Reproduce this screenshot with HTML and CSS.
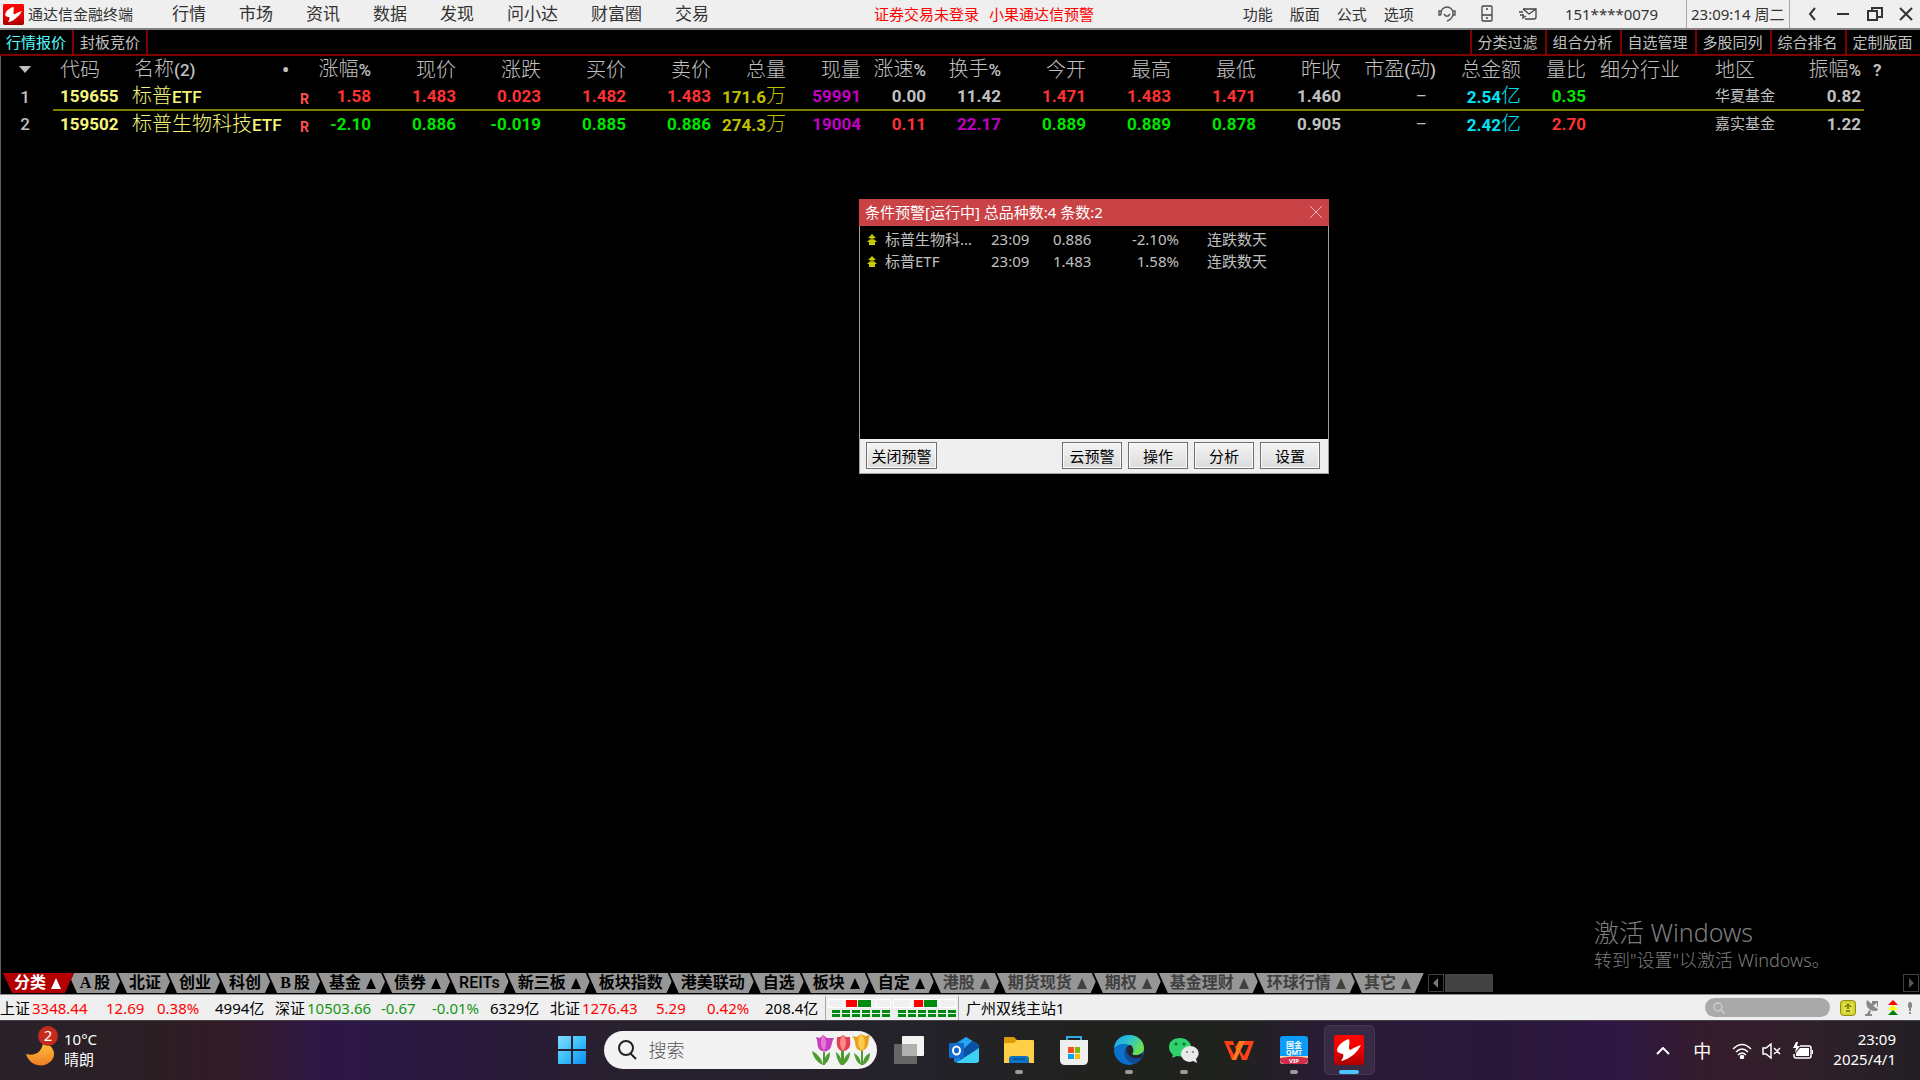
FILE: index.html
```html
<!DOCTYPE html>
<html lang="zh-CN">
<head>
  <meta charset="utf-8">
  <title>通达信金融终端</title>
  <link rel="stylesheet" href="styles.css">
</head>
<body>
  <svg class="defs" width="0" height="0">
    <symbol id="tdx" viewBox="0 0 30 30">
      <linearGradient id="red" x1="0" y1="0" x2="0" y2="1"><stop offset="0" stop-color="#ff0505"/><stop offset=".5" stop-color="#e00"/><stop offset="1" stop-color="#a80000"/></linearGradient>
      <rect width="30" height="30" rx="2" fill="url(#red)"/>
      <path d="M15 4C9 6 4 10 3 15c0 3 3 3 6 4 1 2 0 4-2 7 6-1 13-6 17-11 1-2 2-3 3-5-3 1-6 2-9 4-1 1-3 1-3-1 0-3 1-6 0-9z" fill="#fff"/>
    </symbol>
    <symbol id="up2" viewBox="0 0 10 11">
      <path d="M5 0l4 4H7v1l3 3H8v3H2V8H0l3-3V4H1z" fill="#c8c800"/>
      <path d="M2 5h6" stroke="#000" stroke-width=".6"/>
    </symbol>
  </svg>

  <header class="topbar">
    <svg class="logo"><use href="#tdx"/></svg>
    <h1>通达信金融终端</h1>
    <nav class="menu">
      <a href="#">行情</a><a href="#">市场</a><a href="#">资讯</a><a href="#">数据</a><a href="#">发现</a><a href="#">问小达</a><a href="#">财富圈</a><a href="#">交易</a>
    </nav>
    <p class="notice"><span>证券交易未登录</span><span>小果通达信预警</span></p>
    <nav class="options">
      <a href="#">功能</a><a href="#">版面</a><a href="#">公式</a><a href="#">选项</a>
    </nav>
    <div class="top-icons">
      <button aria-label="客服"><svg width="18" height="18" viewBox="0 0 18 18" fill="none" stroke="#555" stroke-width="1.4"><path d="M3 10V8a6 6 0 0 1 12 0v2M3 6H1v4h2M15 6h2v4h-2M15 10c-1 3-3 5-6 6M6 9c2 3 4 3 6 0"/></svg></button>
      <button aria-label="手机"><svg width="12" height="18" viewBox="0 0 12 18" fill="none" stroke="#444" stroke-width="1.3"><rect x="1" y="1" width="10" height="15" rx="1"/><path d="M1 10h10M5 13h2M5 4h2"/></svg></button>
      <button aria-label="邮件"><svg width="20" height="14" viewBox="0 0 20 14" fill="none" stroke="#444" stroke-width="1.3"><path d="M5 2h13v8q0 2-2 2H7M5 2l6 5 7-5M1 5h4M2 8h4M5 8v3l3-2"/></svg></button>
    </div>
    <span class="account">151****0079</span>
    <time class="clock">23:09:14 周二</time>
    <div class="winbtns">
      <button aria-label="返回"><svg width="14" height="16" viewBox="0 0 14 16"><path d="M9 2L4 8l5 6" fill="none" stroke="#333" stroke-width="2"/></svg></button>
      <button aria-label="最小化"><svg width="14" height="16" viewBox="0 0 14 16"><path d="M1 8h12" stroke="#333" stroke-width="2"/></svg></button>
      <button aria-label="还原"><svg width="16" height="16" viewBox="0 0 16 16" fill="none" stroke="#333" stroke-width="2"><path d="M5 4V2h10v9h-4"/><path d="M1 5h9v9H1z"/></svg></button>
      <button aria-label="关闭"><svg width="14" height="16" viewBox="0 0 14 16"><path d="M1 2l12 12M13 2L1 14" stroke="#333" stroke-width="2"/></svg></button>
    </div>
  </header>

  <nav class="toolbar">
    <a class="on" href="#">行情报价</a><a href="#">封板竞价</a>
    <div class="tools">
      <a href="#">分类过滤</a><a href="#">组合分析</a><a href="#">自选管理</a><a href="#">多股同列</a><a href="#">综合排名</a><a href="#">定制版面</a>
    </div>
  </nav>

  <main>
    <table class="quotes">
      <thead>
        <tr>
          <th class="no"><i class="down"></i></th><th class="code">代码</th><th class="name">名称<b>(2)</b></th><th class="mark">•</th>
          <th class="w61">涨幅<b>%</b></th><th class="w85">现价</th><th class="w85">涨跌</th><th class="w85">买价</th><th class="w85">卖价</th>
          <th class="w75">总量</th><th class="w75">现量</th><th class="w65">涨速<b>%</b></th><th class="w75">换手<b>%</b></th>
          <th class="w85">今开</th><th class="w85">最高</th><th class="w85">最低</th><th class="w85">昨收</th><th class="w95">市盈<b>(</b>动<b>)</b></th>
          <th class="w85">总金额</th><th class="w65">量比</th><th class="industry">细分行业</th><th class="region">地区</th><th class="w61">振幅<b>%</b></th><th class="help">?</th>
        </tr>
      </thead>
      <tbody>
        <tr class="current">
          <td class="no">1</td><td class="code">159655</td><td class="name">标普<b>ETF</b></td><td class="mark">R</td>
          <td class="up">1.58</td><td class="up">1.483</td><td class="up">0.023</td><td class="up">1.482</td><td class="up">1.483</td>
          <td class="vol">171.6<span>万</span></td><td class="last">59991</td><td>0.00</td><td>11.42</td>
          <td class="up">1.471</td><td class="up">1.483</td><td class="up">1.471</td><td>1.460</td><td class="none">–</td>
          <td class="amount">2.54<span>亿</span></td><td class="dn">0.35</td><td></td><td class="region">华夏基金</td><td>0.82</td><td></td>
        </tr>
        <tr>
          <td class="no">2</td><td class="code">159502</td><td class="name">标普生物科技<b>ETF</b></td><td class="mark">R</td>
          <td class="dn">-2.10</td><td class="dn">0.886</td><td class="dn">-0.019</td><td class="dn">0.885</td><td class="dn">0.886</td>
          <td class="vol">274.3<span>万</span></td><td class="last">19004</td><td class="up">0.11</td><td class="last">22.17</td>
          <td class="dn">0.889</td><td class="dn">0.889</td><td class="dn">0.878</td><td>0.905</td><td class="none">–</td>
          <td class="amount">2.42<span>亿</span></td><td class="up">2.70</td><td></td><td class="region">嘉实基金</td><td>1.22</td><td></td>
        </tr>
      </tbody>
    </table>

    <section class="alert">
      <div class="alert-title">
        <h2>条件预警[运行中] 总品种数:4 条数:2</h2>
        <button aria-label="关闭"><svg width="12" height="12" viewBox="0 0 12 12"><path d="M0 0l12 12M12 0L0 12" stroke="#eeb4b4"/></svg></button>
      </div>
      <table>
        <tr><td class="a-icon"><svg><use href="#up2"/></svg></td><td class="a-name">标普生物科...</td><td class="a-time">23:09</td><td class="a-price">0.886</td><td class="a-pct">-2.10%</td><td class="a-cond">连跌数天</td></tr>
        <tr><td class="a-icon"><svg><use href="#up2"/></svg></td><td class="a-name">标普ETF</td><td class="a-time">23:09</td><td class="a-price">1.483</td><td class="a-pct">1.58%</td><td class="a-cond">连跌数天</td></tr>
      </table>
      <div class="alert-foot">
        <button class="stop">关闭预警</button><button>云预警</button><button>操作</button><button>分析</button><button>设置</button>
      </div>
    </section>

    <div class="activate">
      <p class="big">激活 Windows</p>
      <p>转到"设置"以激活 Windows。</p>
    </div>
  </main>

  <div class="tabbar">
    <nav class="tabs">
      <a class="on" href="#">分类<i></i></a><a href="#"><b>A</b>股</a><a href="#">北证</a><a href="#">创业</a><a href="#">科创</a><a href="#"><b>B</b>股</a><a href="#">基金<i></i></a><a href="#">债券<i></i></a><a class="reits" href="#">REITs</a><a href="#">新三板<i></i></a><a href="#">板块指数</a><a href="#">港美联动</a><a href="#">自选</a><a href="#">板块<i></i></a><a href="#">自定<i></i></a><a class="dim" href="#">港股<i></i></a><a class="dim" href="#">期货现货<i></i></a><a class="dim" href="#">期权<i></i></a><a class="dim" href="#">基金理财<i></i></a><a class="dim" href="#">环球行情<i></i></a><a class="dim" href="#">其它<i></i></a>
    </nav>
    <button class="arrow" aria-label="向左"><svg width="6" height="10" viewBox="0 0 6 10"><path d="M5 0v10L0 5z" fill="#777"/></svg></button>
    <span class="thumb"></span>
    <button class="arrow end" aria-label="向右"><svg width="6" height="10" viewBox="0 0 6 10"><path d="M1 0v10l5-5z" fill="#555"/></svg></button>
  </div>

  <div class="status">
    <div class="index rise"><span>上证</span><em>3348.44</em><em>12.69</em><em>0.38%</em><span>4994亿</span></div>
    <div class="index fall"><span>深证</span><em>10503.66</em><em>-0.67</em><em>-0.01%</em><span>6329亿</span></div>
    <div class="index rise"><span>北证</span><em>1276.43</em><em>5.29</em><em>0.42%</em><span>208.4亿</span></div>
    <div class="meter">
      <svg width="128" height="18" viewBox="0 0 128 18">
        <g fill="#f0f0f0" stroke="#fff"><path d="M.5.5h62v8H.5zM65.500.5h62v8h-62zM15 1v7M48 1v7M83 1v7M112 1v7"/></g>
        <path d="M18 1h11v7H18zM86 1h9v7h-9z" fill="#f00"/>
        <path d="M30 1h13v7H30zM96 1h13v7H96z" fill="#008a10"/>
        <path d="M4 12.500h59M4 16.500h59M70 12.500h58M70 16.500h58" stroke="#008a10" stroke-width="3" stroke-dasharray="8 2"/>
      </svg>
    </div>
    <span class="server">广州双线主站1</span>
    <label class="find"><svg width="12" height="12" viewBox="0 0 12 12" fill="none" stroke="#ccc" stroke-width="1.500"><circle cx="5" cy="5" r="4"/><path d="M8 8l4 4"/></svg><input type="text" aria-label="搜索品种"></label>
    <div class="status-icons">
      <svg width="16" height="16" viewBox="0 0 16 16"><rect x=".5" y=".5" width="15" height="15" rx="3" fill="#d2d22c" stroke="#8d8d10"/><path d="M3 3h10v10H3z" fill="#dede48"/><path d="M8 3l4 4H9v2H7V7H4zM6 10h4v2H6z" fill="#8a8a0a"/></svg>
      <svg width="14" height="16" viewBox="0 0 14 16" fill="#888"><path d="M2 0c-2 5 1 11 8 11 2 0 3-1 3-2L8 6l4-3v4h1V1H7v3zM4 10l-2 4H0v2h7v-2H5l1-3z"/></svg>
      <svg width="10" height="16" viewBox="0 0 10 16"><path d="M5 0l5 5H0z" fill="#f00"/><path d="M5 5l5 5H0z" fill="#ff0"/><path d="M5 10l5 5H0z" fill="#008000"/></svg>
      <svg width="6" height="12" viewBox="0 0 6 12" fill="#888"><path d="M2 0h2l1 2v3L4 6v3H2V6L1 5V2zM2 10h2v2H2z"/></svg>
    </div>
  </div>

  <footer class="taskbar">
    <a class="weather" href="#">
      <span class="moon"><svg width="28" height="26" viewBox="0 0 28 26"><linearGradient id="mg" x1="0" y1="0" x2="0" y2="1"><stop offset="0" stop-color="#ffc33d"/><stop offset="1" stop-color="#ef7d23"/></linearGradient><path d="M0 13c9 3 17-3 17-12 12 4 14 14 7 20-8 7-21 3-24-8z" fill="url(#mg)"/></svg><b>2</b></span>
      <span class="temp">10°C<br>晴朗</span>
    </a>
    <div class="apps">
      <button class="start" aria-label="开始"><svg width="30" height="30" viewBox="0 0 30 30"><linearGradient id="wg" x1="0" y1="0" x2="1" y2="1"><stop offset="0" stop-color="#82dcfb"/><stop offset=".5" stop-color="#3cc0fb"/><stop offset="1" stop-color="#0c8df6"/></linearGradient><path d="M1 1h13v13H1zM16 1h13v13H16zM1 16h13v13H1zM16 16h13v13H16z" fill="url(#wg)"/></svg></button>
      <label class="search">
        <svg width="20" height="20" viewBox="0 0 20 20" fill="none" stroke="#222" stroke-width="2"><circle cx="9" cy="8" r="7"/><path d="M13 13l6 6"/></svg>
        <input type="text" placeholder="搜索">
        <svg width="60" height="32" viewBox="0 0 60 32">
          <g fill="#4d9c2f"><path d="M12 18h2v13h-2z"/><path d="M12 31C5 28 2 22 1 17c6 3 10 8 11 14zM13 31c0-7 2-10 6-13 0 6-2 10-6 13z"/><path d="M30 16h3v15h-3z"/><path d="M30 31c-3-3-5-9-5-13 4 3 6 8 6 13zM32 31c0-6 3-10 7-13 0 6-3 11-7 13zM50 16h2v15h-2z"/><path d="M50 31c-4-2-6-7-7-12 5 3 7 7 7 12zM52 31c0-7 3-10 7-12 0 6-3 10-7 12z"/></g>
          <path d="M5 3l4 1 3-3 4 3 7 0c-2 3-2 6-3 9-2 5-9 6-12 2C6 12 7 7 5 3z" fill="#c63fbb"/><path d="M12 1c-3 5-3 11 1 16 3-5 3-11-1-16z" fill="#e878d8"/>
          <path d="M26 3l3 0 3-2 3 2 4 0c0 5 1 8-1 11-3 4-9 4-11 0s-1-7-1-11z" fill="#e0404f"/><path d="M32 1c-4 4-4 11 0 16 4-5 4-12 0-16z" fill="#fa8a8a"/>
          <path d="M41 2l5 1 4-3 4 2 5-1c-2 5-1 9-3 12-3 5-9 5-11 0-1-4-1-8-4-11z" fill="#e8a01c"/><path d="M50 0c-4 5-4 12 1 17 4-5 4-13-1-17z" fill="#fccb4c"/>
        </svg>
      </label>
      <button aria-label="任务视图"><svg width="32" height="32" viewBox="0 0 32 32"><rect x="9" y="2" width="22" height="20" rx="1" fill="#f3f3f3"/><rect x="1" y="10" width="23" height="20" rx="1" fill="#666"/><path d="M9 10h15v12H9z" fill="#b0b0b0"/></svg></button>
      <button aria-label="Outlook"><svg width="32" height="32" viewBox="0 0 32 32"><path d="M6 10L18 3l13 8v17H6z" fill="#1480d8"/><path d="M18 3l11 7-16 10-6-8z" fill="#28a8ea"/><path d="M24 7l7 4v4L13 26l-3-6z" fill="#0b4fa6"/><path d="M31 14v12q0 3-3 3H8z" fill="#3fd0f5"/><rect x="1" y="9" width="15" height="15" rx="1" fill="#0f6cce"/><ellipse cx="8.500" cy="16.500" rx="3.500" ry="4" fill="none" stroke="#fff" stroke-width="2"/></svg></button>
      <button class="run" aria-label="文件资源管理器"><svg width="32" height="32" viewBox="0 0 32 32"><path d="M1 4q0-1 1-1h9l3 3h12v7H1z" fill="#dd9a08"/><path d="M1 9h10l3-3h16q1 0 1 1v22H1z" fill="#ffcf48"/><path d="M6 29v-4q0-3 3-3h14q3 0 3 3v4z" fill="#0f73c4"/><path d="M10 25h12" stroke="#064e91" stroke-width="1.500"/></svg></button>
      <button aria-label="Microsoft Store"><svg width="32" height="32" viewBox="0 0 32 32"><path d="M9 8V3h14v5" fill="none" stroke="#2da9e6" stroke-width="2"/><path d="M2 6h28v20q0 5-5 5H7q-5 0-5-5z" fill="#efefef"/><path d="M10 13h6v6h-6z" fill="#f25022"/><path d="M17 13h5v6h-5z" fill="#7fba00"/><path d="M10 20h6v5h-6z" fill="#00a4ef"/><path d="M17 20h5v5h-5z" fill="#ffb900"/></svg></button>
      <button class="run" aria-label="Edge"><svg width="32" height="32" viewBox="0 0 32 32"><linearGradient id="eg" x1="0" y1="0" x2="1" y2=".5"><stop offset="0" stop-color="#1b9de2"/><stop offset=".5" stop-color="#2cc3cf"/><stop offset="1" stop-color="#6ae14e"/></linearGradient><circle cx="16" cy="16" r="15" fill="#0c71ca"/><path d="M1 14C2 6 8 1 16 1c9 0 15 6 15 13 0 5-4 7-8 7-4 0-5-1-4-3 3-6-8-13-18-4z" fill="url(#eg)"/><path d="M18 11c-6 0-6 7-3 11 4 4 10 4 14 1l1-5c-4 4-9 4-11 2 2-2 2-6-1-9z" fill="#24222b"/><path d="M13 14c-4 4-1 14 8 16 4-1 7-4 8-7-6 3-15 1-16-9z" fill="#114b95"/></svg></button>
      <button class="run" aria-label="微信"><svg width="32" height="32" viewBox="0 0 32 32"><path d="M12 4C5 4 1 8 1 13c0 4 2 6 4 8l-1 3 5-2c8 2 14-3 14-9 0-5-5-9-11-9z" fill="#2fd26d"/><path d="M22 12c-5 0-9 4-9 8s4 8 9 8l3-1 4 2-1-4c6-6 1-13-6-13z" fill="#e9e9e9"/><g fill="#176b35"><circle cx="8" cy="10" r="1.500"/><circle cx="16" cy="10" r="1.500"/></g><g fill="#777"><circle cx="19" cy="18" r="1"/><circle cx="25" cy="18" r="1"/></g></svg></button>
      <button aria-label="WPS"><svg width="32" height="32" viewBox="0 0 32 32"><path d="M1 7h9l2 6 4-6h15l-7 19h-5l-3-8-3 8H9zM6 11l5 10 2-5-2-5zM20 11l-3 5 4 6 5-11z" fill="#ff4018" fill-rule="evenodd"/><path d="M16 7h6l-9 19h-4l4-9z" fill="#ff7a1c"/></svg></button>
      <button class="run" aria-label="国金QMT"><svg width="32" height="32" viewBox="0 0 32 32"><rect x="2" y="2" width="28" height="28" rx="3" fill="#0a9cf8"/><path d="M2 22h28v5q0 3-3 3H5q-3 0-3-3z" fill="#f4d9a6"/><path d="M2 24q14-3 28 0v2q0 4-5 4H7q-5 0-5-4z" fill="#d22c4c"/><text x="16" y="14" font-size="8">国金</text><text x="16" y="21" font-size="7">QMT</text><text x="16" y="29" font-size="6">VIP</text></svg></button>
      <button class="active" aria-label="通达信"><svg width="30" height="30"><use href="#tdx"/></svg></button>
    </div>
    <div class="tray">
      <button aria-label="显示隐藏的图标"><svg width="14" height="8" viewBox="0 0 14 8"><path d="M1 7l6-6 6 6" fill="none" stroke="#fff" stroke-width="2"/></svg></button>
      <button class="ime">中</button>
      <button class="net" aria-label="网络和音量">
        <svg width="20" height="16" viewBox="0 0 20 16" fill="none" stroke="#fff" stroke-width="1.500"><path d="M1 6q9-9 18 0M4 9q6-6 12 0M6 12q4-4 8 0"/><circle cx="10" cy="14" r="1.500" fill="#fff"/></svg>
        <svg width="20" height="16" viewBox="0 0 20 16" fill="none" stroke="#fff" stroke-width="1.500"><path d="M1 5h3l5-4v14l-5-4H1zM12 5l6 6M18 5l-6 6"/></svg>
        <svg width="22" height="18" viewBox="0 0 22 18" fill="none" stroke="#fff" stroke-width="1.500"><path d="M8 4h9q2 0 2 2v8q0 2-2 2H4q-2 0-2-2v-2"/><path d="M8 6h9v8H4v-3zM4 0L1 6h3L3 11l5-7H5l1-4zM20 8h1v4h-1z" fill="#fff" stroke="none"/></svg>
      </button>
      <time>23:09<br>2025/4/1</time>
    </div>
  </footer>
</body>
</html>
```
FILE: styles.css
```css
* {
  box-sizing: border-box;
}
body {
  margin: 0;
  height: 100vh;
  display: flex;
  flex-direction: column;
  overflow: hidden;
  background: #000;
  color: #c0c0c0;
  font: 15px/20px "Noto Sans", "Noto Sans CJK SC", sans-serif;
}
h1, h2, p {
  margin: 0;
  font-size: 15px;
  font-weight: 400;
}
a {
  color: inherit;
  text-decoration: none;
}
button, input {
  padding: 0;
  border: 0;
  background: none;
  color: inherit;
  font: inherit;
}
svg {
  display: block;
  flex: none;
}
.defs {
  position: absolute;
}
i, em {
  font-style: normal;
}

/* title bar */
.topbar {
  display: flex;
  align-items: center;
  height: 30px;
  padding-left: 3px;
  background: #efefef;
  border-bottom: 2px solid #808080;
  color: #333;
  white-space: nowrap;
}
.logo {
  width: 21px;
  height: 21px;
  margin-right: 4px;
}
.menu {
  display: flex;
  gap: 33px;
  margin-left: 39px;
  font-size: 17px;
}
.notice {
  display: flex;
  gap: 10px;
  margin: 0 auto 0 165px;
  color: #f00;
}
.options {
  display: flex;
  gap: 17px;
}
.top-icons {
  display: flex;
  align-items: center;
  gap: 25px;
  margin-left: 24px;
}
.account {
  margin: 0 28px 0 27px;
}
.clock {
  width: 104px;
  padding-left: 4px;
  border: solid #a8a8a8;
  border-width: 0 1px;
  line-height: 28px;
}
.winbtns {
  display: flex;
  justify-content: space-between;
  width: 130px;
  padding: 0 7px 0 16px;
}

.toolbar {
  display: flex;
  height: 26px;
  border-bottom: 2px solid #800000;
  line-height: 24px;
}
.toolbar a {
  width: 74px;
  text-align: center;
  border-right: 2px solid #800000;
}
.toolbar .on {
  color: #54ffff;
}
.tools {
  display: flex;
  margin-left: auto;
}
.tools a {
  width: 75px;
  padding-right: 2px;
  border-right: 0;
  border-left: 2px solid #800000;
}

/* quotes */
main {
  position: relative;
  flex: 1;
  border-left: 1px solid #606060;
}
.quotes {
  width: 100%;
  table-layout: fixed;
  border-collapse: collapse;
  font: 700 17px/24px Roboto, "Noto Sans CJK SC", sans-serif;
}
.quotes th, .quotes td {
  height: 27px;
  padding: 0 3px 0 0;
  text-align: right;
  white-space: nowrap;
}
.quotes th {
  font-size: 20px;
  font-weight: 300;
}
.quotes b {
  font-size: 17px;
  font-weight: 500;
}
.quotes td span {
  font-size: 20px;
  font-weight: 300;
}
.current td {
  border-bottom: 2px solid #808000;
}
.current td:first-child, .current td:last-child {
  border-bottom: 0;
}
.quotes .no {
  width: 52px;
  padding: 0 4px 0 0;
  font-weight: 500;
  text-align: center;
}
.down {
  display: inline-block;
  border: solid transparent;
  border-width: 7px 6px 4px;
  border-top-color: #c0c0c0;
}
.quotes .code {
  width: 73px;
  padding-left: 7px;
  text-align: left;
}
.quotes .name {
  width: 156px;
  padding: 0 0 0 6px;
  text-align: left;
}
.quotes th.name {
  padding-left: 8px;
}
td.code, td.name {
  color: #f5f57a;
}
.quotes td.name {
  font-size: 20px;
  font-weight: 300;
}
.quotes .mark {
  width: 31px;
  padding-right: 4px;
}
.quotes th.mark {
  font-weight: 700;
  text-align: left;
}
.quotes td.mark {
  color: #ff5050;
  font-size: 14px;
  line-height: 20px;
  vertical-align: bottom;
}
.w61 { width: 61px; }
.w65 { width: 65px; }
.w75 { width: 75px; }
.w85 { width: 85px; }
.w95 { width: 95px; }
.quotes .industry {
  width: 114px;
  padding-left: 11px;
  text-align: left;
}
.quotes .region {
  width: 100px;
  padding-left: 12px;
  text-align: left;
}
.quotes td.region {
  font-size: 15px;
  font-weight: 400;
}
.quotes th.help {
  padding-left: 9px;
  font-size: 17px;
  font-weight: 700;
  text-align: left;
}
.quotes td.none {
  padding-right: 12px;
  font-weight: 400;
}
.up { color: #ff3232; }
.dn { color: #00e600; }
.vol { color: #c0c000; }
.last { color: #c000c0; }
.amount { color: #02e2f4; }

/* alert window */
.alert {
  position: absolute;
  left: 858px;
  top: 143px;
  display: flex;
  flex-direction: column;
  width: 470px;
  height: 275px;
  border: 1px solid #a0a0a0;
  background: #000;
}
.alert-title {
  display: flex;
  align-items: center;
  justify-content: space-between;
  height: 27px;
  margin: -1px -1px 0;
  padding: 0 7px 2px 6px;
  background: #c94246;
  color: #fff;
}
.alert table {
  margin-top: 2px;
  border-spacing: 0;
  table-layout: fixed;
  width: 430px;
}
.alert td {
  height: 22px;
  padding: 0;
  white-space: nowrap;
}
.a-icon { width: 25px; }
.a-icon svg {
  width: 10px;
  height: 11px;
  margin-left: 7px;
}
.a-name { width: 106px; }
.a-time { width: 62px; }
.a-price { width: 60px; }
.a-pct {
  width: 66px;
  text-align: right;
}
.alert .a-cond { padding-left: 28px; }
.alert-foot {
  display: flex;
  align-items: center;
  gap: 6px;
  height: 34px;
  margin-top: auto;
  padding: 0 8px 1px 6px;
  background: #efefef;
}
.alert-foot button {
  width: 60px;
  height: 27px;
  border: 1px solid #707070;
  box-shadow: inset 0 0 0 1px #fafafa;
  background: linear-gradient(#f4f4f4, #dcdcdc);
  color: #000;
}
.alert-foot .stop {
  width: 71px;
  margin-right: auto;
}

.activate {
  position: absolute;
  right: 86px;
  bottom: 0;
  width: 240px;
  color: #7e7e7e;
  white-space: nowrap;
}
.activate p {
  font-size: 18px;
  font-weight: 300;
  line-height: 24px;
}
.activate .big {
  font-size: 25px;
  line-height: 32px;
}

/* category tabs */
.tabbar {
  display: flex;
  align-items: center;
  height: 22px;
  border-left: 1px solid #606060;
}
.tabs {
  display: flex;
  margin-right: 4px;
  color: #000;
  font: 700 16px/20px "Liberation Sans", "Noto Sans CJK SC", sans-serif;
}
.tabs a {
  position: relative;
  display: flex;
  align-items: center;
  justify-content: center;
  min-width: 58px;
  height: 20px;
  margin-right: -8px;
  padding: 0 13px;
  white-space: nowrap;
  background: #000;
  clip-path: polygon(0 0, 100% 0, calc(100% - 9px) 100%, 9px 100%);
}
.tabs a::before {
  content: "";
  position: absolute;
  inset: 0;
  z-index: -1;
  background: #969696;
  clip-path: polygon(2px 0, 100% 0, calc(100% - 9px) 100%, 11px 100%);
}
.tabs a:last-child {
  margin-right: 0;
}
.tabs .on {
  z-index: 1;
  color: #fff;
}
.tabs .on::before {
  background: #b40000;
}
.tabs .dim {
  color: #404040;
}
.tabs .reits {
  font-family: Roboto, sans-serif;
  font-weight: 500;
}
.tabs b {
  font-family: "Liberation Serif", serif;
  margin-right: 3px;
}
.tabs i {
  margin-left: 5px;
  border: solid transparent;
  border-width: 0 5px 11px;
  border-bottom-color: currentColor;
}
.arrow {
  display: flex;
  align-items: center;
  justify-content: center;
  width: 16px;
  height: 18px;
  border: 1px solid #404040;
}
.thumb {
  width: 48px;
  height: 18px;
  margin-left: 1px;
  background: #434343;
}
.end {
  margin: 0 1px 0 auto;
}

.status {
  display: flex;
  align-items: center;
  height: 26px;
  background: #efefef;
  border-top: 1px solid #909090;
  color: #000;
  white-space: nowrap;
}
.index {
  display: grid;
  grid-template-columns: 32px 74px 51px 58px 60px;
}
.rise em { color: #f00; }
.fall em { color: #149614; }
.meter {
  padding: 3px 2px;
  border: solid #a8a8a8;
  border-width: 0 1px;
}
.server {
  margin: 0 auto 0 7px;
}
.find {
  display: flex;
  align-items: center;
  width: 125px;
  height: 19px;
  padding-left: 8px;
  border-radius: 10px;
  background: #a9a9a9;
}
.find input {
  min-width: 0;
  flex: 1;
}
.status-icons {
  display: flex;
  align-items: center;
  gap: 9px;
  padding: 0 7px 0 10px;
}

/* windows taskbar */
.taskbar {
  display: grid;
  grid-template-columns: 1fr auto 1fr;
  align-items: center;
  height: 60px;
  border-top: 1px solid #454348;
  background: linear-gradient(90deg, #29222a 0, #2c1e24 8%, #331b27 12%, #2e1748 17%, #29193b 25%, #28202e 32%, #24222a 48%, #20221d 58%, #20221d 64%, #2a1a38 70%, #2a1838 78%, #2e1745 84%, #351c2c 89%, #30202a 94%, #231f24 100%);
  color: #fff;
}
.weather {
  display: flex;
  align-items: center;
  gap: 5px;
  padding-left: 26px;
}
.moon {
  position: relative;
  width: 33px;
  padding: 10px 0 4px;
}
.moon b {
  position: absolute;
  top: -5px;
  left: 12px;
  width: 20px;
  height: 20px;
  border-radius: 50%;
  background: #c42b1c;
  font-weight: 400;
  line-height: 19px;
  text-align: center;
}
.temp, .tray time {
  padding-bottom: 4px;
}
.apps {
  display: flex;
  align-items: center;
  padding: 0 0 1px 3px;
}
.apps button {
  position: relative;
  display: flex;
  align-items: center;
  justify-content: center;
  width: 51px;
  height: 50px;
  margin: 0 2px;
  border: 1px solid transparent;
  border-radius: 5px;
}
.apps .start {
  margin: 0 6px 0 0;
}
.apps text {
  fill: #fff;
  font-weight: 700;
  text-anchor: middle;
}
.search {
  display: flex;
  align-items: center;
  width: 273px;
  height: 38px;
  margin-right: 5px;
  padding: 0 6px 0 13px;
  border-radius: 19px;
  background: #f3f3f3;
  color: #444;
}
.search input {
  flex: 1;
  min-width: 0;
  margin-left: 12px;
  font-size: 18px;
  font-weight: 300;
}
.search input::placeholder {
  color: #555;
}
.apps .run::after, .apps .active::after {
  content: "";
  position: absolute;
  bottom: 0;
  width: 8px;
  height: 4px;
  border-radius: 2px;
  background: #9b9a9f;
}
.apps .active {
  border-color: #433750;
  background: #382944;
}
.apps .active::after {
  width: 20px;
  background: #4cc2ff;
}
.tray {
  display: flex;
  align-items: center;
  justify-content: flex-end;
  padding-right: 24px;
}
.ime {
  margin: 0 21px 0 23px;
  font-size: 18px;
}
.net {
  display: flex;
  align-items: center;
  gap: 10px;
  margin-right: 19px;
}
.tray time {
  text-align: right;
}
```
